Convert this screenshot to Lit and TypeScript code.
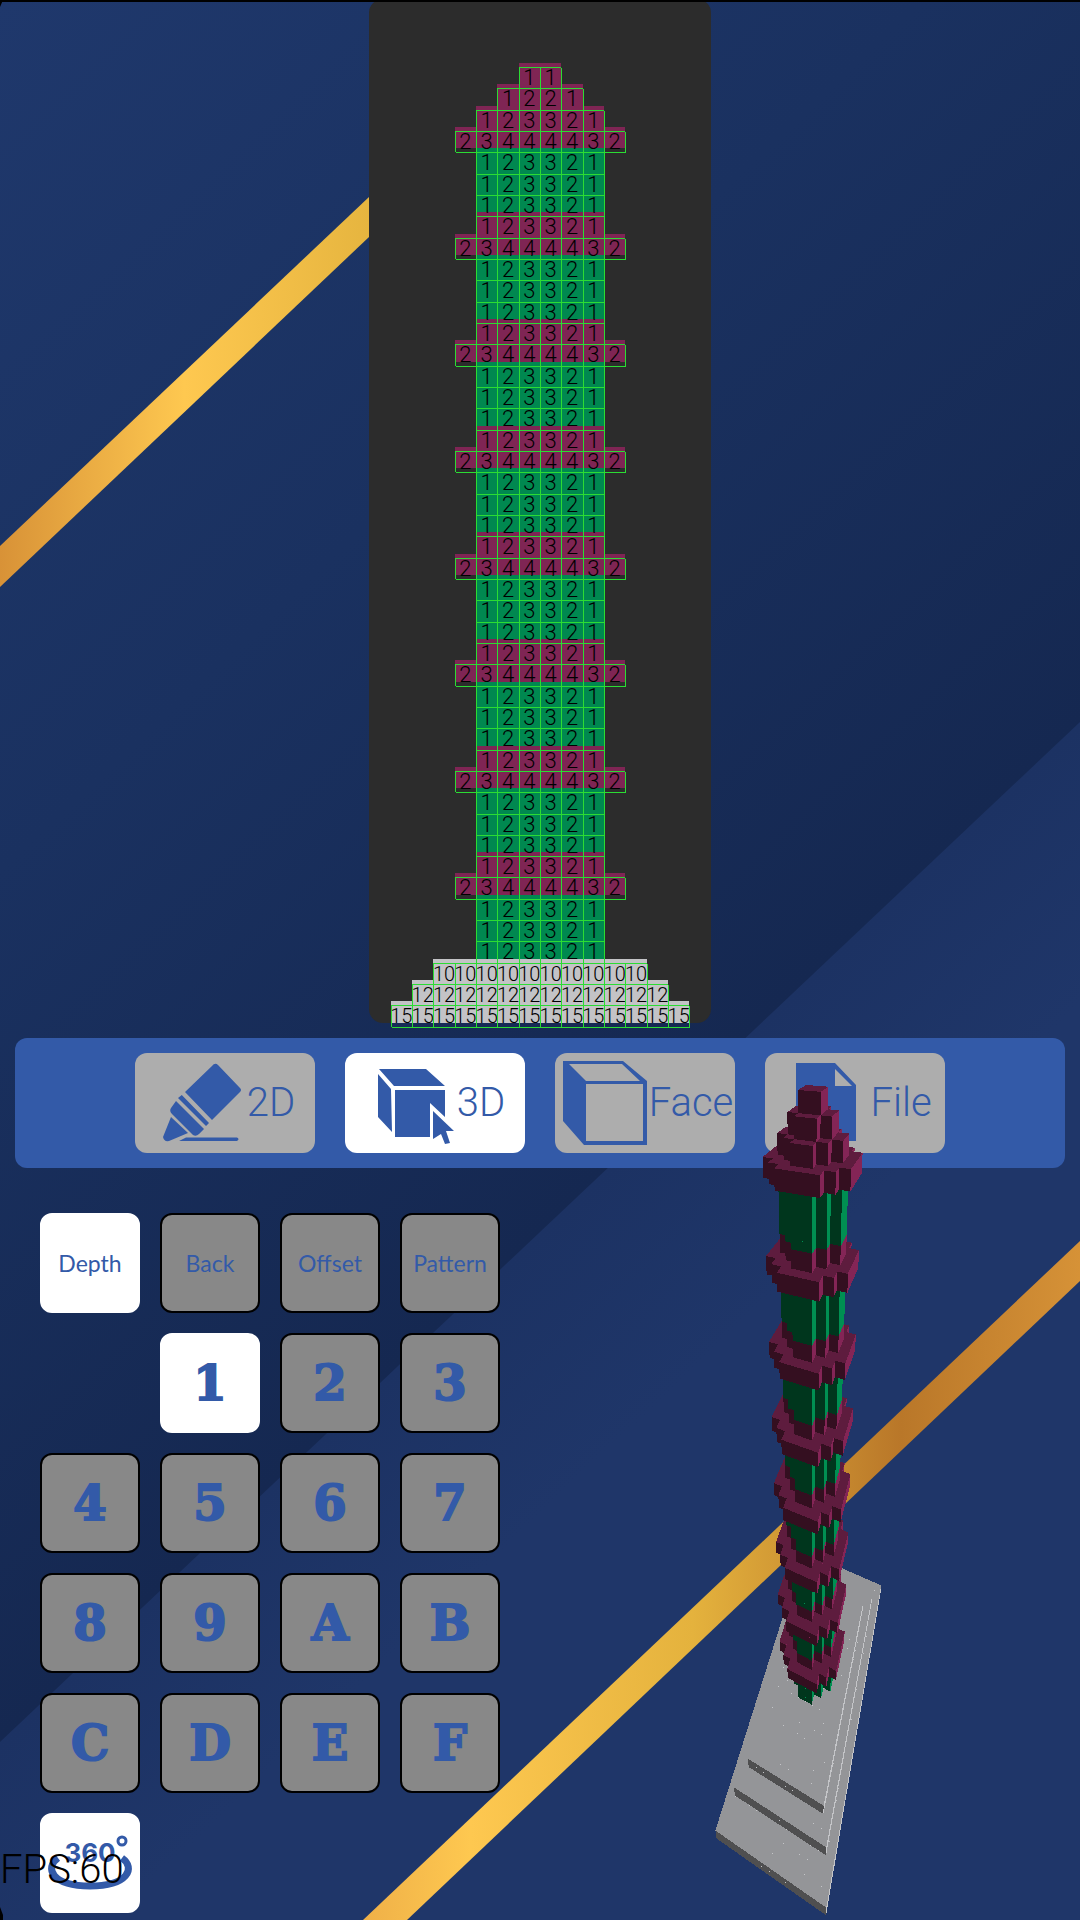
import { LitElement, html, svg, css } from "lit";
import { customElement, state } from "lit/decorators.js";

type Tone = "rose" | "green" | "stone";
interface Layer {
  tone: Tone;
  depths: number[];
}

/** Perspective camera: rows give screen x, screen y and the divisor for model units / 10. */
const CAMERA = [
  [0.639954, -0.009883, -0.246884, 0.12175],
  [0.205436, -1.058067, 0.563438, 2.952111],
  [-0.049055, -0.093231, -0.133943, 1],
];

function project(x: number, y: number, z: number): [number, number] {
  const [u, v, w] = CAMERA.map((r) => (r[0] * x + r[1] * y + r[2] * z) / 10 + r[3]);
  return [800 + (100 * u) / w, 1400 + (100 * v) / w];
}

const SHAFT = [1, 2, 3, 3, 2, 1];
const RING = [2, 3, 4, 4, 4, 4, 3, 2];
const layer = (tone: Tone, depths: number[]): Layer => ({ tone, depths });

/** Layers of the model, from its tip down to its base. */
const LAYERS: Layer[] = [layer("rose", [1, 1]), layer("rose", [1, 2, 2, 1])];
for (let i = 0; i < 8; i++) {
  LAYERS.push(layer("rose", SHAFT), layer("rose", RING));
  for (let j = 0; j < 3; j++) LAYERS.push(layer("green", SHAFT));
}
LAYERS.push(
  layer("stone", new Array(10).fill(10)),
  layer("stone", new Array(12).fill(12)),
  layer("stone", new Array(14).fill(15))
);

const SHADES = {
  rose: { top: "#5e1c3e", front: "#340f20", side: "#842556", speck: 0.06 },
  green: { top: "#006036", front: "#00361d", side: "#008f52", speck: 0.3 },
  stone: { top: "#949598", front: "#4f4f50", side: "#c4c5c8", speck: 0.25 },
};

function noise(a: number, b: number, c: number) {
  const s = Math.sin(a * 12.9898 + b * 78.233 + c * 37.719) * 43758.5453;
  return s - Math.floor(s);
}

@customElement("app-root")
export class AppRoot extends LitElement {
  @state() private tool = "3D";
  @state() private mode = "Depth";
  @state() private digit = "1";

  static styles = css`
    :host {
      display: block;
      font-family: Roboto, "Liberation Sans", sans-serif;
    }
    .page {
      position: relative;
      isolation: isolate;
      min-height: 100vh;
      overflow: hidden;
      background: #1f3669;
      box-sizing: border-box;
    }
    .backdrop,
    .scene {
      position: absolute;
      inset: 0;
      width: 100%;
      height: 100%;
      pointer-events: none;
    }
    .backdrop {
      z-index: -1;
    }
    .rim {
      position: absolute;
      top: 0;
      left: 0;
      right: 0;
      height: 2px;
      background: #000;
    }
    .board {
      width: 31.6%;
      margin: -1px auto 15px;
      border-radius: 14px;
      background: #2c2c2c;
      display: flow-root;
      isolation: isolate;
    }
    .layers {
      display: grid;
      grid-template-rows: repeat(48, minmax(0, 1fr));
      aspect-ratio: 1 / 3;
      margin: 4px 0 -4px;
    }
    .layers::before {
      content: "";
      grid-row: span 3;
    }
    .layer {
      display: flex;
      justify-content: center;
      min-height: 0;
    }
    .cell {
      position: relative;
      flex: none;
      box-sizing: border-box;
      width: 6.25%;
      display: flex;
      justify-content: center;
      box-shadow: inset 1px 1px #2bdc33, 1px 1px #2bdc33;
      color: #000;
      font: 300 22px/22px Roboto, sans-serif;
    }
    .cell::before {
      content: "";
      position: absolute;
      inset: -4px 0 4px;
      z-index: -1;
      background: #7f2554;
    }
    .green::before {
      background: #008850;
    }
    .stone {
      font-size: 20px;
    }
    .stone::before {
      background: #c3c3c6;
    }
    .toolbar {
      display: flex;
      justify-content: center;
      gap: 30px;
      margin: 0 15px;
      padding: 15px;
      border-radius: 12px;
      background: #335aa8;
    }
    .tool {
      display: grid;
      grid-template-columns: 92px 1fr;
      align-items: center;
      width: 180px;
      height: 100px;
      padding: 0;
      border: 0;
      border-radius: 12px;
      background: #adadad;
      color: #335aa8;
      font: 300 40px/48px Roboto, sans-serif;
      text-align: center;
      white-space: nowrap;
    }
    .tool svg {
      width: 92px;
      height: 100px;
      overflow: visible;
      fill: currentColor;
    }
    .keys {
      display: grid;
      grid-template-columns: repeat(4, 100px);
      grid-auto-rows: 100px;
      gap: 20px;
      margin: 45px 40px 7px;
    }
    .key {
      border: 2px solid #000;
      border-radius: 12px;
      padding: 0;
      background: #888;
      color: #335aa8;
      font: bold 48px/56px "DejaVu Serif", serif;
      -webkit-text-stroke: 2px #335aa8;
      text-align: center;
    }
    .mode {
      font: 400 23px/28px Lato, sans-serif;
      -webkit-text-stroke: 0;
    }
    .first {
      grid-column: 2;
    }
    .tool.on,
    .key.on {
      background: #fff;
      border-color: #fff;
    }
    .spin {
      width: 96px;
      height: 96px;
      display: block;
    }
    .spin text {
      font: bold 26px Inter, sans-serif;
      -webkit-text-stroke: 0;
    }
    .fps {
      position: absolute;
      left: 0;
      bottom: 26px;
      font: 300 40px/48px Roboto, sans-serif;
      color: #000;
    }
  `;

  private icon(name: string) {
    switch (name) {
      case "2D":
        return svg`<path d="M77 13Q80 9 83 12L105 35Q107 37 105 39L77 67L50 39ZM46.800 42L74 70L71 73L43 45ZM41 48L69 76L64 81Q61 84 58 82L37 61Q34 58 36 55ZM36 64L53 80L34 88Q29 89 28 84ZM44 88L51 84.500H102Q105 86 102 88Z"/>`;
      case "3D":
        return svg`<path d="M34 16H81L100 33H49ZM33 21L46 36L47 79L33 64ZM50 37H100V64L85 50V84H50ZM88 58L109 78H101L105 90L100 91L96 81L88 86Z"/>`;
      case "Face":
        return svg`<path fill-rule="evenodd" d="M8 8H68L92 28V92H29L8 68ZM14 11L31 28H85L67 11ZM31 31V88H88V31Z"/>`;
      default:
        return svg`<path fill-rule="evenodd" d="M31 10H70L91 32V88H31ZM70 16V33H87Z"/>`;
    }
  }

  private tower() {
    const shapes: unknown[] = [];
    const quad = (fill: string, corners: number[][]) => {
      const points = corners.map(([x, y, z]) => project(x, y, z).map((n) => n.toFixed(1)).join(","));
      shapes.push(svg`<polygon fill=${fill} points=${points.join(" ")} />`);
    };
    const speck = (fill: string, x: number, y: number, z: number) => {
      const [u, v] = project(x, y, z).map(Math.round);
      shapes.push(svg`<rect fill=${fill} x=${u} y=${v} width="1" height="1" />`);
    };
    [...LAYERS].reverse().forEach(({ tone, depths }, y) => {
      const shade = SHADES[tone];
      const t = y + 1;
      let i = 0;
      while (i < depths.length) {
        const d = depths[i];
        let j = i;
        while (depths[j] === d) j++;
        const x0 = i - depths.length / 2;
        const x1 = j - depths.length / 2;
        quad(shade.top, [[x0, t, d], [x1, t, d], [x1, t, -d], [x0, t, -d]]);
        quad(shade.side, [[x1, t, d], [x1, t, -d], [x1, y, -d], [x1, y, d]]);
        quad(shade.front, [[x0, t, d], [x1, t, d], [x1, y, d], [x0, y, d]]);
        for (let x = x0 + 1; x < x1; x++) {
          if (noise(x, y, 0) < shade.speck) speck(shade.side, x, y + 0.5, d);
          if (tone !== "stone") continue;
          for (let z = 1 - d; z < d; z++) if (noise(x, y, z) < shade.speck) speck(shade.side, x, t, z);
        }
        i = j;
      }
    });
    return shapes;
  }

  render() {
    return html`<main class="page">
      <svg class="backdrop" viewBox="0 0 1080 1920" preserveAspectRatio="none" aria-hidden="true">
        <defs>
          <linearGradient id="sky" gradientUnits="userSpaceOnUse" x1="0" y1="0" x2="869" y2="921">
            <stop offset="0" stop-color="#1f386c" />
            <stop offset="0.5" stop-color="#1a3160" />
            <stop offset="1" stop-color="#152851" />
          </linearGradient>
          <linearGradient id="ground" gradientUnits="userSpaceOnUse" x1="869" y1="921" x2="1010" y2="1070">
            <stop offset="0" stop-color="#1c3263" />
            <stop offset="1" stop-color="#1f3669" />
          </linearGradient>
          <linearGradient id="gold1" gradientUnits="userSpaceOnUse" x1="0" y1="0" x2="369" y2="0">
            <stop offset="0" stop-color="#d89237" />
            <stop offset="0.5" stop-color="#fec850" />
            <stop offset="1" stop-color="#e6b53f" />
          </linearGradient>
          <linearGradient id="gold2" gradientUnits="userSpaceOnUse" x1="363" y1="0" x2="1080" y2="0">
            <stop offset="0" stop-color="#efb048" />
            <stop offset="0.15" stop-color="#fec850" />
            <stop offset="0.46" stop-color="#e4b23d" />
            <stop offset="0.75" stop-color="#b97729" />
            <stop offset="1" stop-color="#d69237" />
          </linearGradient>
        </defs>
        <rect fill="url(#ground)" width="1080" height="1920" />
        <polygon fill="url(#sky)" points="0,0 1080,0 1080,722 0,1742" />
        <polygon fill="url(#gold1)" points="0,546 369,197 369,237 0,587" />
        <polygon fill="url(#gold2)" points="363,1920 1080,1241 1080,1281 407,1920" />
        <path d="M0 0H3L0 7ZM0 1907L3 1915V1920H0Z" />
      </svg>
      <section class="board" aria-label="Depth map">
        <div class="layers">
          ${LAYERS.map(
            (l) => html`<div class="layer">${l.depths.map((d) => html`<span class="cell ${l.tone}">${d}</span>`)}</div>`
          )}
        </div>
      </section>
      <nav class="toolbar" aria-label="Views">
        ${["2D", "3D", "Face", "File"].map(
          (t) => html`<button class="tool ${t === this.tool ? "on" : ""}" @click=${() => (this.tool = t)}>
            <svg viewBox="0 0 92 100" aria-hidden="true">${this.icon(t)}</svg><span>${t}</span>
          </button>`
        )}
      </nav>
      <section class="keys" aria-label="Keypad">
        ${["Depth", "Back", "Offset", "Pattern"].map(
          (m) => html`<button class="key mode ${m === this.mode ? "on" : ""}" @click=${() => (this.mode = m)}>${m}</button>`
        )}
        ${[..."123456789ABCDEF"].map(
          (k) => html`<button
            class="key ${k === "1" ? "first" : ""} ${k === this.digit ? "on" : ""}"
            @click=${() => (this.digit = k)}
          >${k}</button>`
        )}
        <button class="key on" aria-label="Rotate view">
          <svg class="spin" viewBox="2 2 96 96">
            <text x="50" y="49" text-anchor="middle" fill="#335aa8">360</text>
            <circle cx="82" cy="28" r="4" fill="none" stroke="#335aa8" stroke-width="3" />
            <path d="M18 45C4 55 12 73 50 73S96 55 82 45" fill="none" stroke="#335aa8" stroke-width="7" />
          </svg>
        </button>
      </section>
      <svg class="scene" viewBox="0 0 1080 1920" preserveAspectRatio="none" shape-rendering="crispEdges" aria-hidden="true">
        ${this.tower()}
      </svg>
      <div class="fps">FPS:60</div>
      <div class="rim"></div>
    </main>`;
  }
}
